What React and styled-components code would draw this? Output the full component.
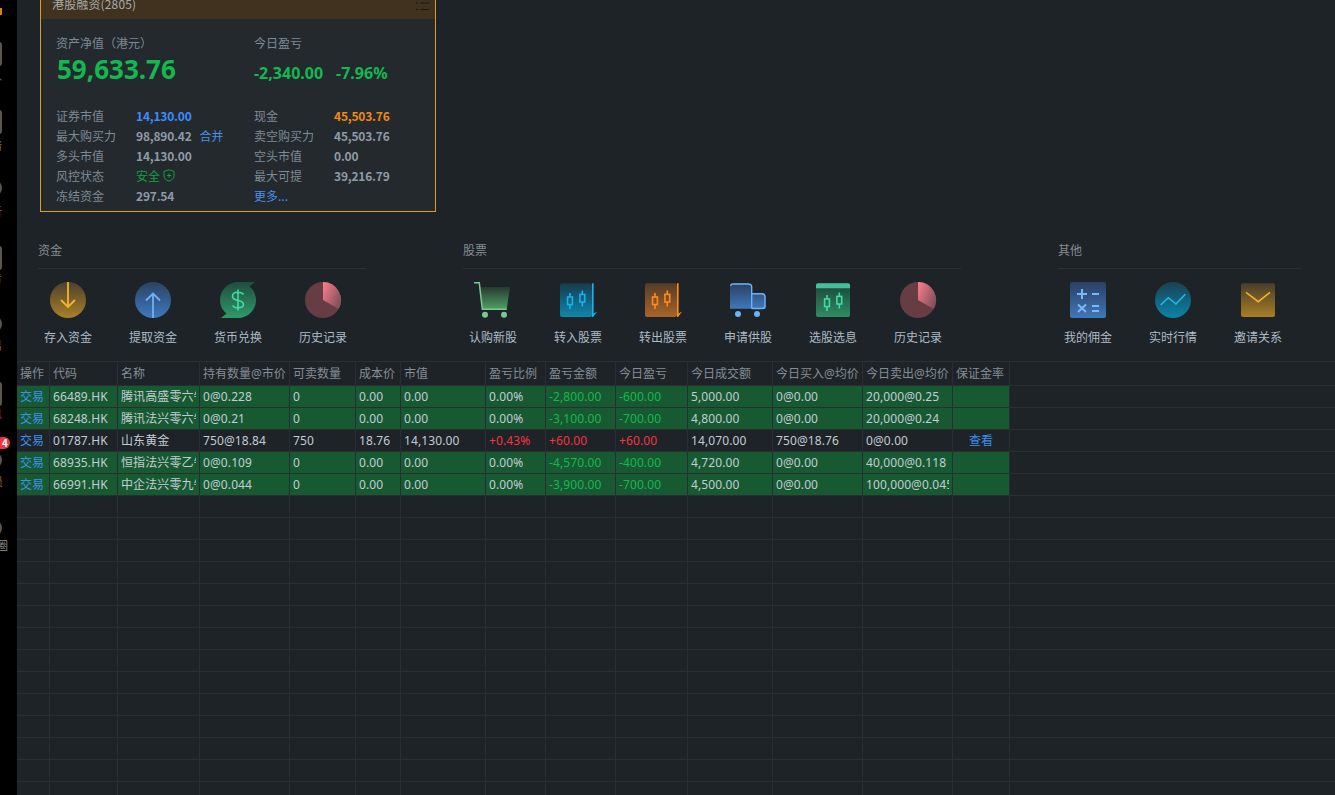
import React from "react";
import styled, { createGlobalStyle } from "styled-components";

const GlobalStyle = createGlobalStyle`
  html, body {
    margin: 0;
    height: 100%;
    overflow: hidden;
    background: #000;
  }
  body {
    font-family: "Noto Sans CJK SC", "Noto Sans", sans-serif;
    font-size: 12px;
  }
`;

const Page = styled.div`
  display: flex;
  height: 795px;
  overflow: hidden;
`;

const Sidebar = styled.div`
  position: relative;
  flex: 0 0 17px;
  width: 17px;
  padding-top: 42px;
  background: #000;
  overflow: hidden;
  box-sizing: border-box;
`;

const TopMark = styled.div`
  position: absolute;
  left: 0;
  top: 8px;
  width: 2px;
  height: 7px;
  background: #d9820f;
`;

const SideItem = styled.div`
  display: flex;
  flex-direction: column;
  align-items: flex-end;
  height: 68px;
`;

const SideIcon = styled.div`
  flex: 0 0 auto;
  width: 24px;
  height: ${(p) => (p.$round ? "20px" : "24px")};
  margin-right: 15px;
  background: #5e564c;
  border-radius: ${(p) => (p.$round ? "50%" : "3px")};
`;

const SideLabel = styled.div`
  margin-top: ${(p) => p.$gap}px;
  margin-right: ${(p) => p.$right}px;
  line-height: 14px;
  font-size: 11px;
  white-space: nowrap;
  color: ${(p) => p.$color};
`;

const SideBadge = styled.div`
  position: absolute;
  left: -4px;
  top: 437px;
  width: 14px;
  height: 12px;
  border-radius: 6px;
  background: #f5333f;
  color: #fff;
  font-size: 10px;
  font-weight: 700;
  line-height: 12px;
  text-align: right;
  padding-right: 2px;
  box-sizing: border-box;
`;

const Main = styled.div`
  flex: 1;
  min-width: 0;
  background: #1d2327;
  display: flex;
  flex-direction: column;
`;

const Card = styled.div`
  width: 396px;
  height: 225px;
  margin: -13px 0 0 23px;
  box-sizing: border-box;
  border: 1px solid #e09a20;
  background: #23292d;
  flex: 0 0 auto;
`;

const CardHeader = styled.div`
  height: 31px;
  box-sizing: border-box;
  display: flex;
  align-items: center;
  justify-content: space-between;
  padding: 0 6px 1px 11px;
  background: #40321f;
  color: #a8acac;
  font-size: 12px;
  letter-spacing: 0.15px;
`;

const CardBody = styled.div`
  padding: 15px 15px 0;
`;

const Summary = styled.div`
  display: grid;
  grid-template-columns: 198px 1fr;
  color: #7f8a94;
  line-height: 18px;
`;

const BigValue = styled.div`
  margin-left: 1px;
  font-size: 26px;
  font-weight: 700;
  line-height: 34px;
  color: #12b850;
  font-family: "Noto Sans", sans-serif;
`;

const TodayValues = styled.div`
  display: flex;
  gap: 13px;
  align-items: center;
  height: 42px;
  font-size: 16px;
  font-weight: 700;
  color: #12b850;
  font-family: "Noto Sans", sans-serif;
`;

const Details = styled.div`
  display: grid;
  grid-template-columns: 80px 118px 80px 1fr;
  grid-auto-rows: 20px;
  margin-top: 11px;
  align-items: center;
  color: #7f8a94;
`;

const Value = styled.div`
  display: flex;
  align-items: center;
  gap: 3px;
  font-weight: ${(p) => (p.$plain ? 400 : 700)};
  letter-spacing: ${(p) => (p.$plain ? "0" : "-0.2px")};
  color: ${(p) => p.$color || "#8f9aa6"};
`;

const MergeLink = styled.span`
  margin-left: 5px;
  color: #4a8fe8;
  font-weight: 400;
  letter-spacing: 0;
`;

const Groups = styled.div`
  display: grid;
  grid-template-columns: 328px 498px 243px;
  column-gap: 97px;
  padding: 29px 0 0 21px;
  flex: 0 0 auto;
`;

const GroupTitle = styled.div`
  line-height: 18px;
  padding-bottom: 9px;
  border-bottom: 1px solid #2a3035;
  color: #858d94;
`;

const GroupItems = styled.div`
  display: flex;
  gap: 25px;
  padding: 13px 0 15px;
`;

const Item = styled.div`
  width: 60px;
  display: flex;
  flex-direction: column;
  align-items: center;
  gap: 10px;
  color: #aebbc6;
  line-height: 18px;
`;

const ItemSvg = styled.svg`
  display: block;
  width: 36px;
  height: 36px;
  overflow: visible;
`;

const Table = styled.div`
  flex: 1;
  border-top: 1px solid #2a3035;
  overflow: hidden;
`;

const Row = styled.div`
  display: grid;
  grid-template-columns: 33px 68px 82px 90px 66px 45px 85px 60px 70px 72px 85px 90px 90px 57px 1fr;
  height: ${(p) => (p.$head ? "24px" : "22px")};
`;

const Cell = styled.div`
  box-sizing: border-box;
  padding: 0 3px;
  border-right: 1px solid #282e33;
  border-bottom: 1px solid #282e33;
  background: ${(p) => (p.$green ? "#175a32" : "transparent")};
  color: ${(p) => p.$color || "#c3ccd4"};
  font-family: "Noto Sans", "Noto Sans CJK SC", sans-serif;
  letter-spacing: 0.1px;
  text-align: ${(p) => p.$align || "left"};
  line-height: 21px;
  min-width: 0;
`;

const HeadCell = styled(Cell)`
  color: #858e96;
  letter-spacing: 0;
  line-height: 23px;
`;

const Filler = styled.div`
  border-bottom: 1px solid #282e33;
`;

const CellText = styled.div`
  overflow: hidden;
  white-space: nowrap;
`;

const BLUE = "#3d90ee";
const GREEN = "#14b850";
const RED = "#f5333f";

const sideItems = [
  { label: "入", right: 15, gap: 2, color: "#77706a" },
  { label: "情", right: 15, gap: 4, color: "#77706a" },
  { label: "析", right: 15, gap: 6, color: "#8a6a50", round: true },
  { label: "告", right: 15, gap: 0, color: "#77706a" },
  { label: "易", right: 15, gap: 4, color: "#8a6a50", round: true },
  { label: "讯", right: 15, gap: 0, color: "#6e2a2a" },
  { label: "员", right: 14, gap: 4, color: "#8a5a20", round: true },
  { label: "圈", right: 9, gap: 0, color: "#8f8a84", round: true },
];

const headers = [
  "操作", "代码", "名称", "持有数量@市价", "可卖数量", "成本价", "市值", "盈亏比例",
  "盈亏金额", "今日盈亏", "今日成交额", "今日买入@均价", "今日卖出@均价", "保证金率",
];

const rows = [
  { code: "66489.HK", name: "腾讯高盛零六牛A", hold: "0@0.228", sell: "0", cost: "0.00", mv: "0.00", ratio: "0.00%", pl: "-2,800.00", today: "-600.00", amt: "5,000.00", buy: "0@0.00", sold: "20,000@0.25", green: true },
  { code: "68248.HK", name: "腾讯法兴零六牛B", hold: "0@0.21", sell: "0", cost: "0.00", mv: "0.00", ratio: "0.00%", pl: "-3,100.00", today: "-700.00", amt: "4,800.00", buy: "0@0.00", sold: "20,000@0.24", green: true },
  { code: "01787.HK", name: "山东黄金", hold: "750@18.84", sell: "750", cost: "18.76", mv: "14,130.00", ratio: "+0.43%", pl: "+60.00", today: "+60.00", amt: "14,070.00", buy: "750@18.76", sold: "0@0.00" },
  { code: "68935.HK", name: "恒指法兴零乙牛C", hold: "0@0.109", sell: "0", cost: "0.00", mv: "0.00", ratio: "0.00%", pl: "-4,570.00", today: "-400.00", amt: "4,720.00", buy: "0@0.00", sold: "40,000@0.118", green: true },
  { code: "66991.HK", name: "中企法兴零九牛D", hold: "0@0.044", sell: "0", cost: "0.00", mv: "0.00", ratio: "0.00%", pl: "-3,900.00", today: "-700.00", amt: "4,500.00", buy: "0@0.00", sold: "100,000@0.045", green: true },
];

const Gradient = ({ id, from, to, diagonal }) => (
  <defs>
    <linearGradient id={id} x1="0" y1="0" x2={diagonal ? "1" : "0"} y2={diagonal ? "0.6" : "1"}>
      <stop offset="0" stopColor={from} />
      <stop offset="1" stopColor={to} />
    </linearGradient>
  </defs>
);

const Candles = ({ color }) => (
  <g fill="none" stroke={color} strokeWidth="1.6">
    <path d="M10 11V15M10 22.6V27M22.3 8.5V12.4M22.3 20V24.5" />
    <rect x="7.6" y="15" width="4.8" height="7.6" />
    <rect x="19.9" y="12.4" width="4.8" height="7.6" />
  </g>
);

const DepositIcon = () => (
  <ItemSvg viewBox="0 0 36 36">
    <Gradient id="deposit" from="#4c412b" to="#a98027" />
    <circle cx="18" cy="18" r="18" fill="url(#deposit)" />
    <path d="M18 0V24.5M11 18L18 25L25 18" fill="none" stroke="#f5b335" strokeWidth="1.8" />
  </ItemSvg>
);

const WithdrawIcon = () => (
  <ItemSvg viewBox="0 0 36 36">
    <Gradient id="withdraw" from="#2a4263" to="#4079bd" />
    <circle cx="18" cy="18" r="18" fill="url(#withdraw)" />
    <path d="M18 36V11.5M11 18.5L18 11.5L25 18.5" fill="none" stroke="#6cb2f8" strokeWidth="1.8" />
  </ItemSvg>
);

const ExchangeIcon = () => (
  <ItemSvg viewBox="0 0 36 36">
    <Gradient id="exchange" from="#1f4e3f" to="#2f9a69" />
    <path d="M18 0H35L29.5 4.5C33.6 7.8 36 12.6 36 18C36 28 28 36 18 36H1L6.5 31.5C2.4 28.2 0 23.4 0 18C0 8 8 0 18 0Z" fill="url(#exchange)" />
    <path d="M18 7.5V28.5M23.5 12.5C22.6 10.9 20.8 10.2 18 10.2C14.7 10.2 12.5 11.8 12.5 14.3C12.5 17.2 14.8 17.9 18 18.5C21.3 19.1 23.5 20 23.5 22.6C23.5 24.9 21.3 25.9 18 25.9C15.2 25.9 13.4 25.2 12.5 23.5" fill="none" stroke="#45d9a3" strokeWidth="1.6" />
  </ItemSvg>
);

const HistoryIcon = ({ id }) => (
  <ItemSvg viewBox="0 0 36 36">
    <Gradient id={id} from="#ff7d8e" to="#85525a" diagonal />
    <circle cx="18" cy="18" r="18" fill="#663d43" />
    <path d="M18 0A18 18 0 0 1 33.6 27L18 18Z" fill={`url(#${id})`} />
  </ItemSvg>
);

const CartIcon = () => (
  <ItemSvg viewBox="0 0 36 36">
    <Gradient id="cart" from="#263a30" to="#50a062" />
    <path d="M4 5H35L31.7 27.3H7.3Z" fill="url(#cart)" />
    <path d="M-1 0.8H4.3L7.3 27.3H31.7" fill="none" stroke="#7bc98e" strokeWidth="1.5" />
    <circle cx="10" cy="32.8" r="3" fill="#7bc98e" />
    <circle cx="29" cy="32.8" r="3" fill="#7bc98e" />
  </ItemSvg>
);

const TransferIcon = ({ id, from, to, color }) => (
  <ItemSvg viewBox="0 0 36 36">
    <Gradient id={id} from={from} to={to} />
    <rect x="0" y="1.3" width="32" height="33.7" rx="2" fill={`url(#${id})`} />
    <path d="M32 1.3H33.6V31.5L37.2 29.4L33 35H32Z" fill={color} />
    <Candles color={color} />
  </ItemSvg>
);

const TruckIcon = () => (
  <ItemSvg viewBox="0 0 36 36">
    <Gradient id="truck" from="#2a3f60" to="#4078ba" />
    <path d="M0 4C0 2.4 1.2 1.3 3 1.3H18C20.4 1.3 21.8 2.8 21.8 5V11.3H32C34.2 11.3 35.5 12.8 35.5 15V26.7H0Z" fill="url(#truck)" />
    <path d="M0.7 4C0.7 2.6 1.6 2 3 2H18C20 2 21.7 3 21.7 5V26.5M21.7 11.8H32C33.8 11.8 35 13 35 15V24C35 25.6 33.8 26.5 32 26.5H21.7" fill="none" stroke="#6cb2f8" strokeWidth="1.4" />
    <circle cx="8" cy="32" r="3" fill="#6cb2f8" />
    <circle cx="27" cy="32" r="3" fill="#6cb2f8" />
  </ItemSvg>
);

const PickIcon = () => (
  <ItemSvg viewBox="0 0 36 36">
    <Gradient id="pick" from="#1d443c" to="#2f8d62" />
    <rect x="1" y="1.3" width="34" height="33.7" rx="2" fill="url(#pick)" />
    <path d="M1 6.3V3.3C1 2.2 1.9 1.3 3 1.3H33C34.1 1.3 35 2.2 35 3.3V6.3Z" fill="#45c09a" />
    <g transform="translate(2 2)">
      <Candles color="#45d9a3" />
    </g>
  </ItemSvg>
);

const CalcIcon = () => (
  <ItemSvg viewBox="0 0 36 36">
    <Gradient id="calc" from="#2a3f62" to="#4078b8" />
    <rect width="36" height="36" rx="2" fill="url(#calc)" />
    <path d="M7 12H17M12 7V17M22 12H29M8 22.5L16 30M16 22.5L8 30M22 24H29M22 29H29" fill="none" stroke="#7ab8f8" strokeWidth="2" />
  </ItemSvg>
);

const QuoteIcon = () => (
  <ItemSvg viewBox="0 0 36 36">
    <Gradient id="quote" from="#1a4052" to="#0a85aa" />
    <circle cx="18" cy="18" r="18" fill="url(#quote)" />
    <path d="M5.7 23L13.3 15.7L21 22L30.3 12.3" fill="none" stroke="#25b9ea" strokeWidth="1.6" />
  </ItemSvg>
);

const InviteIcon = () => (
  <ItemSvg viewBox="0 0 36 36">
    <Gradient id="invite" from="#483e29" to="#a97e25" />
    <rect x="1" y="1.3" width="34" height="33.7" rx="2" fill="url(#invite)" />
    <path d="M6 10.3L18.3 19.7L30 10.3" fill="none" stroke="#f5b02e" strokeWidth="1.6" />
  </ItemSvg>
);

const groups = [
  {
    title: "资金",
    items: [
      { label: "存入资金", icon: <DepositIcon /> },
      { label: "提取资金", icon: <WithdrawIcon /> },
      { label: "货币兑换", icon: <ExchangeIcon /> },
      { label: "历史记录", icon: <HistoryIcon id="history1" /> },
    ],
  },
  {
    title: "股票",
    items: [
      { label: "认购新股", icon: <CartIcon /> },
      { label: "转入股票", icon: <TransferIcon id="stockIn" from="#173a4d" to="#0e87ad" color="#15b4ec" /> },
      { label: "转出股票", icon: <TransferIcon id="stockOut" from="#553d26" to="#a8642a" color="#ff8c1a" /> },
      { label: "申请供股", icon: <TruckIcon /> },
      { label: "选股选息", icon: <PickIcon /> },
      { label: "历史记录", icon: <HistoryIcon id="history2" /> },
    ],
  },
  {
    title: "其他",
    items: [
      { label: "我的佣金", icon: <CalcIcon /> },
      { label: "实时行情", icon: <QuoteIcon /> },
      { label: "邀请关系", icon: <InviteIcon /> },
    ],
  },
];

const ListIcon = () => (
  <svg width="13" height="14" viewBox="0 0 13 14" fill="none" stroke="#15181a" strokeWidth="1">
    <path d="M0 0.5H2M4 0.5H13M0 7H2M4 7H13M0 13.5H2M4 13.5H13" />
  </svg>
);

const ShieldIcon = () => (
  <svg width="12" height="13" viewBox="0 0 12 13" fill="none" stroke="#12a048" strokeWidth="1">
    <path d="M6 0.8L11 2.4V7C11 9.6 8.6 11.4 6 12.2C3.4 11.4 1 9.6 1 7V2.4Z" />
    <path d="M4 6.5H8M6 4.5V8.5" />
  </svg>
);

const plColor = (text) => (text.startsWith("+") ? RED : text.startsWith("-") ? GREEN : undefined);

export default function App() {
  return (
    <Page>
      <GlobalStyle />
      <Sidebar>
        <TopMark />
        {sideItems.map((item) => (
          <SideItem key={item.label}>
            <SideIcon $round={item.round} />
            <SideLabel $gap={item.gap} $right={item.right} $color={item.color}>
              {item.label}
            </SideLabel>
          </SideItem>
        ))}
        <SideBadge>4</SideBadge>
      </Sidebar>
      <Main>
        <Card>
          <CardHeader>
            <span>港股融资(2805)</span>
            <ListIcon />
          </CardHeader>
          <CardBody>
            <Summary>
              <div>
                资产净值（港元）
                <BigValue>59,633.76</BigValue>
              </div>
              <div>
                今日盈亏
                <TodayValues>
                  <span>-2,340.00</span>
                  <span>-7.96%</span>
                </TodayValues>
              </div>
            </Summary>
            <Details>
              <div>证券市值</div>
              <Value $color="#3d8bff">14,130.00</Value>
              <div>现金</div>
              <Value $color="#f08a10">45,503.76</Value>
              <div>最大购买力</div>
              <Value>
                98,890.42<MergeLink>合并</MergeLink>
              </Value>
              <div>卖空购买力</div>
              <Value>45,503.76</Value>
              <div>多头市值</div>
              <Value>14,130.00</Value>
              <div>空头市值</div>
              <Value>0.00</Value>
              <div>风控状态</div>
              <Value $plain $color="#12a048">
                安全
                <ShieldIcon />
              </Value>
              <div>最大可提</div>
              <Value>39,216.79</Value>
              <div>冻结资金</div>
              <Value>297.54</Value>
              <Value $plain $color="#4a8fe8">更多...</Value>
              <div />
            </Details>
          </CardBody>
        </Card>

        <Groups>
          {groups.map((group) => (
            <div key={group.title}>
              <GroupTitle>{group.title}</GroupTitle>
              <GroupItems>
                {group.items.map((item) => (
                  <Item key={item.label}>
                    {item.icon}
                    {item.label}
                  </Item>
                ))}
              </GroupItems>
            </div>
          ))}
        </Groups>

        <Table>
          <Row $head>
            {headers.map((h) => (
              <HeadCell key={h}>
                <CellText>{h}</CellText>
              </HeadCell>
            ))}
            <Filler />
          </Row>
          {rows.map((r) => (
            <Row key={r.code}>
              <Cell $green={r.green} $color={BLUE}>交易</Cell>
              {[r.code, r.name, r.hold, r.sell, r.cost, r.mv].map((text, i) => (
                <Cell key={i} $green={r.green}>
                  <CellText>{text}</CellText>
                </Cell>
              ))}
              {[r.ratio, r.pl, r.today].map((text, i) => (
                <Cell key={i} $green={r.green} $color={plColor(text)}>
                  <CellText>{text}</CellText>
                </Cell>
              ))}
              {[r.amt, r.buy, r.sold].map((text, i) => (
                <Cell key={i} $green={r.green}>
                  <CellText>{text}</CellText>
                </Cell>
              ))}
              <Cell $green={r.green} $color={BLUE} $align="center">
                {r.green ? "" : "查看"}
              </Cell>
              <Filler />
            </Row>
          ))}
          {Array.from({ length: 14 }, (_, i) => (
            <Row key={i}>
              {headers.map((h) => (
                <Cell key={h} />
              ))}
              <Filler />
            </Row>
          ))}
        </Table>
      </Main>
    </Page>
  );
}
